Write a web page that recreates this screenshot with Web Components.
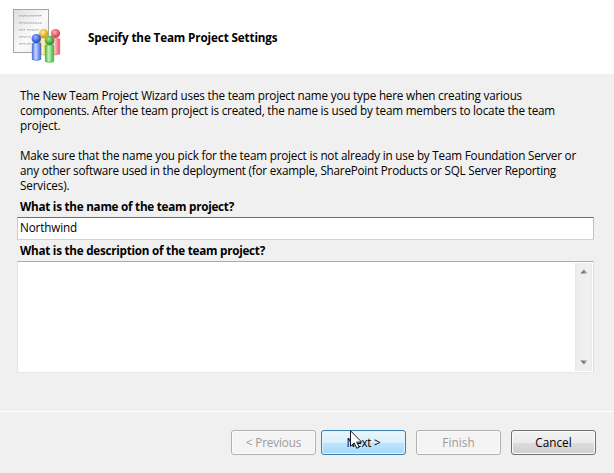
<!DOCTYPE html>
<html lang="en"><head><meta charset="utf-8"><title>New Team Project</title>
<style>html,body{margin:0;height:100%;overflow:hidden;background:#f0f0f0}</style></head>
<body>
<wizard-page></wizard-page>
<script>
const define = (name, html, init) => {
  const t = document.createElement('template');
  t.innerHTML = html;
  customElements.define(name, class extends HTMLElement {
    connectedCallback() {
      if (this.shadowRoot) return;
      this.attachShadow({mode: 'open'}).append(t.content.cloneNode(true));
      if (init) init(this);
    }
  });
};

/* One line of text whose tracking is adjusted to a given width. */
define('text-line', `<style>
:host{display:block;height:15px;line-height:15px;white-space:pre}
span{display:inline-block}
</style><span><slot></slot></span>`, el => {
  const span = el.shadowRoot.querySelector('span');
  const w = span.getBoundingClientRect().width;
  span.style.letterSpacing = ((+el.getAttribute('width') - w) / el.textContent.length) + 'px';
});

define('team-icon', `<style>:host{display:block;width:50px;height:56px}svg{display:block}</style>
<svg width="50" height="56" viewBox="12 8 50 56">
<defs>
<linearGradient id="p" x1="0" y1="0" x2="1" y2="1"><stop stop-color="#dedede"/><stop offset=".55" stop-color="#fafafa"/><stop offset="1" stop-color="#e6e6e6"/></linearGradient>
<linearGradient id="b"><stop stop-color="#4a70e4"/><stop offset=".4" stop-color="#c8d9ff"/><stop offset="1" stop-color="#3f66e0"/></linearGradient>
<linearGradient id="g"><stop stop-color="#45b842"/><stop offset=".4" stop-color="#c2f3bb"/><stop offset="1" stop-color="#42b63e"/></linearGradient>
<linearGradient id="y"><stop stop-color="#efbd35"/><stop offset=".4" stop-color="#fff6bd"/><stop offset="1" stop-color="#ecb830"/></linearGradient>
<linearGradient id="r"><stop stop-color="#f0717a"/><stop offset=".4" stop-color="#ffc8ca"/><stop offset="1" stop-color="#e65562"/></linearGradient>
<radialGradient id="bh" cx=".4" cy=".35"><stop stop-color="#9bb8ff"/><stop offset="1" stop-color="#3157d4"/></radialGradient>
<radialGradient id="gh" cx=".4" cy=".35"><stop stop-color="#a6e79a"/><stop offset="1" stop-color="#339f32"/></radialGradient>
<radialGradient id="yh" cx=".4" cy=".35"><stop stop-color="#fff0a0"/><stop offset="1" stop-color="#dfa614"/></radialGradient>
<radialGradient id="rh" cx=".4" cy=".35"><stop stop-color="#ffb8b8"/><stop offset="1" stop-color="#dc4855"/></radialGradient>
</defs>
<rect x="13.500" y="9.500" width="35" height="43" fill="url(#p)" stroke="#a5a5a5"/>
<g fill="none" stroke="#999" stroke-width=".9" stroke-dasharray="2.200 .5">
<path d="M19 16.300l1-.9 1 .9 1-.9 1 .9 2-.8 1 .7 1-.8 1 .9 2-.8 1 .7 1-.8 1 .8 2-.8 1 .8 1-.8 1 .8 2-.7 2 .4M19 23.300l2-.8 1 .8 1-.8 2 .9 1-.9 1 .8 1-.7 2 .8 2-.8 1 .8 1-.8 2 .8 1-.8 2 .8 3-.6M19 30.400l1-.9 2 .8 1-.8h2M27 30.300l1-.8 2 .8 1-.8 3 .8 1-.8 1 .8 3-.8M19 37.300l2-.9 1 .9 1-.9 2 .8 2-.6M28 37.300l1-.8 2 .7M19 44.300l2-.9 1 .9 1-.9 3 .8M27 44.200l2-.7 2 .6"/>
</g>
<path d="M51 39q4.500-1.500 8.700 0v15q-4 1.600-8.700 0z" fill="url(#r)" stroke="#dc5963" stroke-width=".6"/><circle cx="55.500" cy="33.500" r="4.600" fill="url(#rh)"/>
<path d="M39.500 38q4-1.500 8 0v16q-4 2-8 0z" fill="url(#y)" stroke="#dda424" stroke-width=".6"/><circle cx="43.700" cy="33.700" r="4.700" fill="url(#yh)"/>
<path d="M32.300 43.500q4-1.500 8.500 0v16q-4 1.800-8.500 0z" fill="url(#b)" stroke="#345bd4" stroke-width=".6"/><circle cx="36.300" cy="38.600" r="4.700" fill="url(#bh)"/>
<path d="M45.300 45.500q4-1.500 8.400 0v16q-4 1.800-8.400 0z" fill="url(#g)" stroke="#38a534" stroke-width=".6"/><circle cx="49.600" cy="40.500" r="4.700" fill="url(#gh)"/>
</svg>`);

define('wizard-header', `<style>
:host{display:flex;height:66px;padding:8px 0 0 12px;background:#fff}
.t{padding:22px 0 0 26px;font-weight:bold}
</style><team-icon></team-icon><div class="t"><text-line width="189.500">Specify the Team Project Settings</text-line></div>`);

define('text-field', `<style>
:host{display:block;box-sizing:border-box;height:23px;padding:2px 0 0 2px;background:#fff;border:1px solid;border-color:#3d7bad #a4c9e3 #b7d9ed #b5cfe7;border-radius:1px}
</style><slot></slot>`);

define('scroll-bar', `<style>
:host{display:flex;flex-direction:column;justify-content:space-between;align-items:center;box-sizing:border-box;width:17px;height:108px;padding:6px 0 6px;background:linear-gradient(90deg,#e5e5e5,#eeeeee 2px,#f0f0f0 14px,#e9e9e9)}
svg{display:block}
</style>
<svg width="8" height="5"><defs><linearGradient id="a"><stop stop-color="#505050"/><stop offset="1" stop-color="#b8b8b8"/></linearGradient></defs><path d="M4 .5L7.500 4.500H.5z" fill="url(#a)"/></svg>
<svg width="8" height="5"><defs><linearGradient id="a"><stop stop-color="#505050"/><stop offset="1" stop-color="#b8b8b8"/></linearGradient></defs><path d="M4 4.500L7.500 .5H.5z" fill="url(#a)"/></svg>`);

define('text-box', `<style>
:host{display:flex;justify-content:flex-end;box-sizing:border-box;height:112px;padding:1px;background:#fff;border:1px solid;border-color:#abadb3 #dbdfe6 #e3e9ef #e2e3ea;border-radius:1px}
</style><scroll-bar></scroll-bar>`);

define('push-button', `<style>
:host{display:flex;justify-content:center;box-sizing:border-box;width:85px;height:25px;padding-top:4px;border:1px solid #707070;border-radius:3px;background:linear-gradient(#f2f2f2,#ebebeb 50%,#dddddd 50%,#cfcfcf);box-shadow:inset 0 0 0 1px #fbfbfb}
:host([disabled]){color:#9b9b9b;border-color:#adb2b5;background:#f4f4f4}
:host([hot]){border-color:#3c7fb1;background:linear-gradient(#eaf6fd,#d9f0fc 50%,#bee6fd 50%,#a7d9f5);box-shadow:inset 0 0 0 1px #ddf3fd}
</style><slot></slot>`);

define('mouse-pointer', `<style>:host{position:absolute;left:350px;top:430px;width:13px;height:20px}svg{display:block}</style>
<svg width="13" height="20"><path d="M.5 .8V16.300L4.200 12.900 6.800 18.300 9.200 17.200 6.700 12.100H11.700z" fill="#fff" stroke="#15151f"/></svg>`);

define('wizard-page', `<style>
:host{display:flex;flex-direction:column;position:relative;width:614px;height:473px;background:#f0f0f0;color:#000;font:11.700px "Open Sans","Noto Sans",sans-serif}
main{height:337px;padding:0 20px 0 17px;box-sizing:border-box}
.copy{padding:14px 0 0 3px}
.copy p{margin:0 0 15px}
.copy p:last-child{margin:0}
.label{padding-left:3px;box-sizing:border-box;font-weight:bold}
.first{height:24px;padding-top:6px}
.second{height:21px;padding-top:3px}
footer{display:flex;padding:18px 0 0 231px;border-top:1px solid #fff}
push-button{margin-right:5px}
push-button[hot],push-button[disabled]:nth-of-type(3){margin-right:10px}
</style>
<wizard-header></wizard-header>
<main>
<div class="copy"><p>
<text-line width="502">The New Team Project Wizard uses the team project name you type here when creating various</text-line>
<text-line width="535">components. After the team project is created, the name is used by team members to locate the team</text-line>
<text-line width="40.500">project.</text-line></p><p>
<text-line width="556">Make sure that the name you pick for the team project is not already in use by Team Foundation Server or</text-line>
<text-line width="536">any other software used in the deployment (for example, SharePoint Products or SQL Server Reporting</text-line>
<text-line width="49.500">Services).</text-line></p></div>
<div class="label first"><text-line width="214">What is the name of the team project?</text-line></div>
<text-field><text-line width="57">Northwind</text-line></text-field>
<div class="label second"><text-line width="245">What is the description of the team project?</text-line></div>
<text-box></text-box>
</main>
<footer>
<push-button disabled><text-line width="55.500">&lt; Previous</text-line></push-button>
<push-button hot><text-line width="34">Next &gt;</text-line></push-button>
<push-button disabled><text-line width="32.500">Finish</text-line></push-button>
<push-button><text-line width="36.500">Cancel</text-line></push-button>
</footer>
<mouse-pointer></mouse-pointer>`);
</script>
</body></html>
